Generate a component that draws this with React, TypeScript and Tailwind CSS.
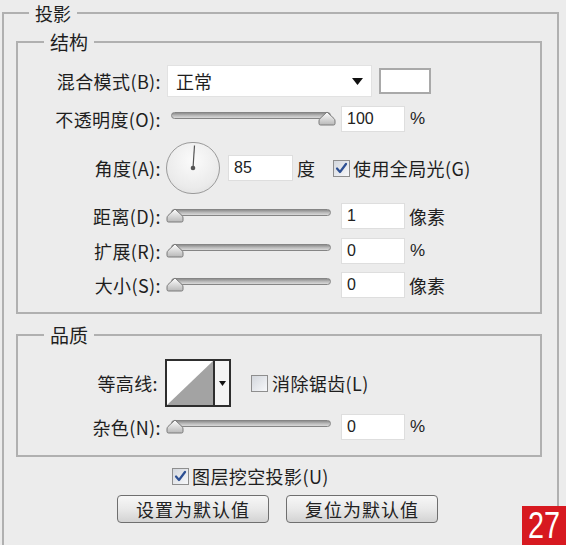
import React from "react";

const font = "font-['Noto_Sans_CJK_SC','Noto_Sans',sans-serif]";

function Slider({ pos }: { pos: "left" | "right" }) {
  return (
    <div className="relative ml-[5px] w-[171px] h-[26px] shrink-0">
      <div className="absolute left-[5px] right-[6px] top-[6px] h-[7px] rounded-full border border-[#858585] bg-gradient-to-b from-[#8e8e8e] via-[#b9b9b9] to-[#dadada]" />
      <svg
        className={
          pos === "left"
            ? "absolute left-0 top-[5px]"
            : "absolute right-[1px] top-[5px]"
        }
        width="18"
        height="15"
        viewBox="0 0 18 15"
      >
        <defs>
          <linearGradient id="thumbG" x1="0" y1="0" x2="0" y2="1">
            <stop offset="0" stopColor="#ffffff" />
            <stop offset="1" stopColor="#b8b8b8" />
          </linearGradient>
        </defs>
        <path
          d="M9 1 L16 7.5 Q17 8.5 17 10 L17 12.5 Q17 14 15.5 14 L2.5 14 Q1 14 1 12.5 L1 10 Q1 8.5 2 7.5 Z"
          fill="url(#thumbG)"
          stroke="#7a7a7a"
          strokeWidth="1"
          strokeLinejoin="round"
        />
      </svg>
    </div>
  );
}

function NumBox({ value, w = 64, ml = 4 }: { value: string; w?: number; ml?: number }) {
  return (
    <div
      className="h-[26px] bg-white border border-[#dedede] flex items-center pl-[5px] text-[16px] font-['Liberation_Sans',sans-serif] text-[#222] shrink-0"
      style={{ width: w, marginLeft: ml }}
    >
      {value}
    </div>
  );
}

function Check({ checked }: { checked: boolean }) {
  return (
    <div className="w-[17px] h-[17px] border border-[#8e8e8e] bg-gradient-to-br from-[#d3d7dd] to-[#f7f8fa] flex items-center justify-center shrink-0">
      {checked && (
        <svg width="13" height="13" viewBox="0 0 13 13">
          <path d="M2 6.5 L5 10 L11 2" fill="none" stroke="#2c4f93" strokeWidth="2.2" strokeLinecap="round" strokeLinejoin="round" />
        </svg>
      )}
    </div>
  );
}

function Label({ text, w = 143 }: { text: string; w?: number }) {
  return (
    <div className="text-right shrink-0 leading-none tracking-[0.4px]" style={{ width: w }}>
      {text}
    </div>
  );
}

function Dial() {
  return (
    <div className="ml-[5px] w-[54px] h-[52px] rounded-full border border-[#9a9a9a] bg-[radial-gradient(circle_at_50%_35%,#fbfbfb,#ebebeb_65%,#dadada)] shrink-0">
      <svg width="52" height="50" viewBox="0 0 52 50">
        <line x1="26" y1="25" x2="27.5" y2="2.5" stroke="#555" strokeWidth="1.2" />
        <circle cx="26" cy="25" r="2.3" fill="#555" />
      </svg>
    </div>
  );
}

function Contour() {
  return (
    <div className="ml-[7px] w-[66px] h-[48px] border-2 border-[#2e2e2e] flex shrink-0 bg-[#f4f4f4]">
      <svg width="46" height="44" viewBox="0 0 46 44" className="bg-white">
        <polygon points="0,44 46,0 46,44" fill="#a3a3a3" />
      </svg>
      <div className="w-[2px] bg-[#2e2e2e]" />
      <div className="flex-1 flex items-center justify-center">
        <svg width="7" height="5" viewBox="0 0 7 5">
          <polygon points="0,0 7,0 3.5,5" fill="#111" />
        </svg>
      </div>
    </div>
  );
}

function Button({ text, ml }: { text: string; ml: number }) {
  return (
    <div
      className="w-[152px] h-[28px] rounded-[4px] border border-[#6f6f6f] bg-gradient-to-b from-[#f7f7f7] via-[#e9e9e9] to-[#d3d3d3] flex items-center justify-center text-[18px] tracking-[1px] leading-none text-[#222] shrink-0"
      style={{ marginLeft: ml }}
    >
      {text}
    </div>
  );
}

export default function App() {
  return (
    <div className={`relative w-[566px] h-[545px] overflow-hidden bg-[#ececec] text-[#1e1e1e] text-[18px] ${font}`}>
      <fieldset className="ml-[2px] w-[557px] h-[620px] border-2 border-[#b0b0b0] px-[12px]">
        <legend className="ml-[13px] px-[6px] text-[18px] leading-[26px]">投影</legend>

        {/* 结构 */}
        <fieldset className="mt-[4px] w-[526px] border-2 border-[#b0b0b0] pb-[14px]">
          <legend className="ml-[26px] px-[6px] text-[19px] leading-[24px]">结构</legend>

          <div className="mt-[11px] h-[32px] flex items-center">
            <Label text="混合模式(B):" />
            <div className="ml-[6px] w-[205px] h-[32px] bg-white border border-[#e2e2e2] flex items-center pl-[8px] pr-[8px]">
              <span className="flex-1 leading-none">正常</span>
              <svg width="11" height="7" viewBox="0 0 11 7">
                <polygon points="0,0 11,0 5.5,7" fill="#111" />
              </svg>
            </div>
            <div className="ml-[7px] w-[52px] h-[26px] bg-white border-2 border-[#a9a9a9]" />
          </div>

          <div className="mt-[9px] h-[26px] flex items-center">
            <Label text="不透明度(O):" />
            <Slider pos="right" />
            <NumBox value="100" />
            <span className="ml-[5px] text-[17px] font-['Liberation_Sans',sans-serif]">%</span>
          </div>

          <div className="mt-[10px] h-[52px] flex items-center">
            <Label text="角度(A):" />
            <Dial />
            <NumBox value="85" w={65} ml={8} />
            <span className="ml-[4px] leading-none">度</span>
            <div className="ml-[18px]">
              <Check checked />
            </div>
            <span className="ml-[3px] leading-none tracking-[0.4px]">使用全局光(G)</span>
          </div>

          <div className="mt-[9px] h-[26px] flex items-center">
            <Label text="距离(D):" />
            <Slider pos="left" />
            <NumBox value="1" />
            <span className="ml-[4px] leading-none">像素</span>
          </div>

          <div className="mt-[9px] h-[26px] flex items-center">
            <Label text="扩展(R):" />
            <Slider pos="left" />
            <NumBox value="0" />
            <span className="ml-[5px] text-[17px] font-['Liberation_Sans',sans-serif]">%</span>
          </div>

          <div className="mt-[8px] h-[26px] flex items-center">
            <Label text="大小(S):" />
            <Slider pos="left" />
            <NumBox value="0" />
            <span className="ml-[4px] leading-none">像素</span>
          </div>
        </fieldset>

        {/* 品质 */}
        <fieldset className="mt-[9px] w-[526px] border-2 border-[#b0b0b0] pb-[15px]">
          <legend className="ml-[26px] px-[6px] text-[19px] leading-[24px]">品质</legend>

          <div className="mt-[12px] h-[48px] flex items-center">
            <Label text="等高线:" w={140} />
            <Contour />
            <div className="ml-[20px]">
              <Check checked={false} />
            </div>
            <span className="ml-[4px] leading-none tracking-[0.4px]">消除锯齿(L)</span>
          </div>

          <div className="mt-[7px] h-[26px] flex items-center">
            <Label text="杂色(N):" />
            <Slider pos="left" />
            <NumBox value="0" />
            <span className="ml-[5px] text-[17px] font-['Liberation_Sans',sans-serif]">%</span>
          </div>
        </fieldset>

        <div className="mt-[9px] h-[20px] flex items-center pl-[156px]">
          <Check checked />
          <span className="ml-[3px] leading-none tracking-[0.4px]">图层挖空投影(U)</span>
        </div>

        <div className="mt-[9px] flex">
          <Button text="设置为默认值" ml={101} />
          <Button text="复位为默认值" ml={17} />
        </div>
      </fieldset>

      <div className="absolute right-0 bottom-0 w-[44px] h-[39px] bg-[#d71920] flex items-center justify-center">
        <span className="inline-block scale-x-[0.8] text-white text-[36px] leading-none font-['Liberation_Sans',sans-serif]">27</span>
      </div>
    </div>
  );
}
